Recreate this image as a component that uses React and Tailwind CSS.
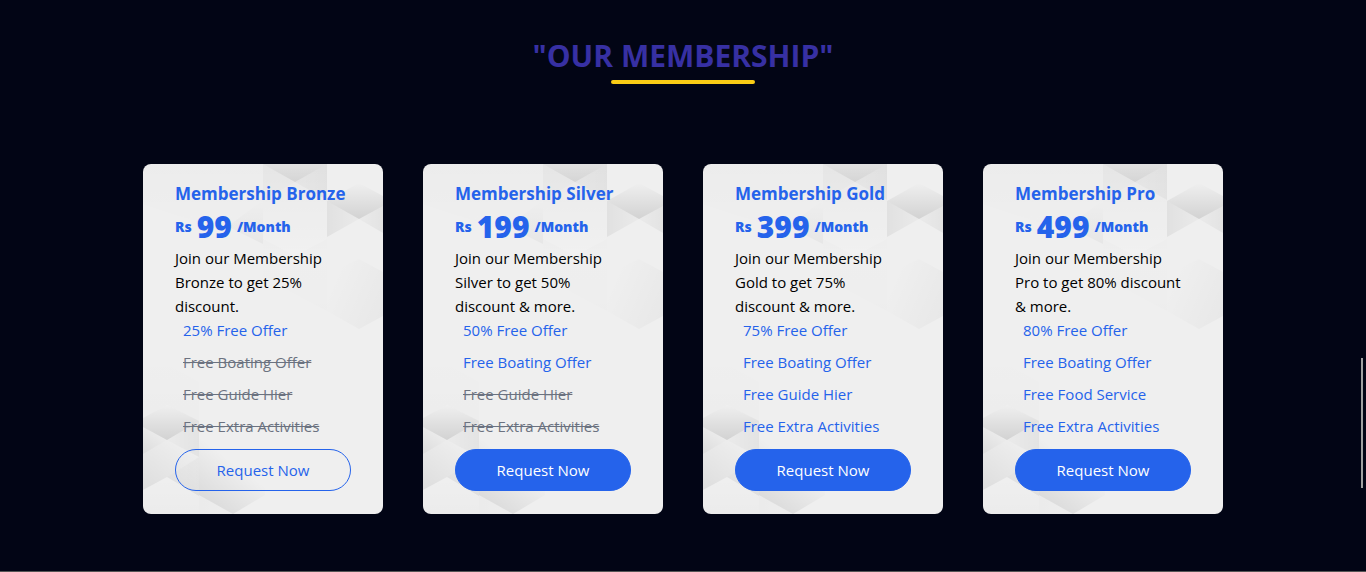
const plans = [
  { name: "Bronze", price: 99, text: "Join our Membership Bronze to get 25% discount.", offers: ["25% Free Offer", "Free Boating Offer", "Free Guide Hier", "Free Extra Activities"], included: 1, outline: true },
  { name: "Silver", price: 199, text: "Join our Membership Silver to get 50% discount & more.", offers: ["50% Free Offer", "Free Boating Offer", "Free Guide Hier", "Free Extra Activities"], included: 2 },
  { name: "Gold", price: 399, text: "Join our Membership Gold to get 75% discount & more.", offers: ["75% Free Offer", "Free Boating Offer", "Free Guide Hier", "Free Extra Activities"], included: 4 },
  { name: "Pro", price: 499, text: "Join our Membership Pro to get 80% discount & more.", offers: ["80% Free Offer", "Free Boating Offer", "Free Food Service", "Free Extra Activities"], included: 4 },
];

function Fade({ id, x1 = 0, y1 = 0, x2 = 0, y2 = 1, from, to }) {
  return (
    <linearGradient id={id} x1={x1} y1={y1} x2={x2} y2={y2}>
      <stop offset="0" stopColor="#000" stopOpacity={from} />
      <stop offset="1" stopColor="#000" stopOpacity={to} />
    </linearGradient>
  );
}

function CardPattern({ id }) {
  const fill = (name) => `url(#${id}-${name})`;
  return (
    <svg aria-hidden="true" className="absolute inset-0 h-full w-full" viewBox="0 0 240 350" preserveAspectRatio="none">
      <defs>
        <Fade id={`${id}-deep`} from={0} to={0.12} />
        <Fade id={`${id}-top`} from={0.02} to={0.08} />
        <Fade id={`${id}-down`} from={0.04} to={0} />
        <Fade id={`${id}-soft`} from={0} to={0.035} />
        <Fade id={`${id}-left`} x1={0} x2={1} y2={0} from={0.06} to={0.02} />
        <Fade id={`${id}-right`} x1={1} x2={0} y2={0} from={0.05} to={0.02} />
        <Fade id={`${id}-corner`} y1={1} x2={0.7} y2={0} from={0.08} to={0} />
        <Fade id={`${id}-wing`} x1={0.25} y1={1} x2={0.65} y2={0.4} from={0.09} to={0} />
        <Fade id={`${id}-fade`} x1={1} y1={0.8} x2={0.1} y2={0.3} from={0.03} to={0} />
      </defs>
      <path fill={fill("down")} d="M0 0H120V80L60 60L0 40Z" opacity=".3" />
      <path fill={fill("down")} d="M120 0H184V90H120Z" />
      <path fill={fill("top")} d="M120 0H184L152 18Z" />
      <path fill={fill("right")} d="M152 18L184 0V36Z" opacity=".5" />
      <path fill="#fff" opacity=".15" d="M120 36L152 18L184 36V75L152 92L120 75Z" />
      <path fill={fill("soft")} d="M88 60L120 36V80L88 64Z" />
      <path fill={fill("deep")} d="M184 37L216 19L240 32V42L216 55Z" />
      <path fill={fill("left")} d="M184 37L216 55L184 73Z" />
      <path fill={fill("right")} d="M216 55L240 42V69Z" />
      <path fill={fill("fade")} d="M184 110L216 95L240 108V152L216 165L184 147Z" />
      <path fill={fill("soft")} d="M120 75L152 92L184 75V147L152 130L120 112Z" opacity=".2" />
      <path fill={fill("soft")} d="M0 190L24 200L56 218V257L24 241L0 254Z" opacity=".3" />
      <path fill={fill("deep")} d="M0 254L24 241L56 257L24 276L0 263Z" />
      <path fill={fill("corner")} d="M0 263L24 276L0 290Z" />
      <path fill={fill("right")} d="M24 276L56 257V293Z" />
      <path fill={fill("corner")} d="M0 290L24 276L56 293V332L24 313L0 326Z" />
      <path fill={fill("right")} d="M24 313L56 293V332Z" opacity=".5" />
      <path fill={fill("wing")} d="M56 331V275H122V331L90 350Z" />
      <path fill={fill("left")} d="M56 331L90 350H56Z" opacity=".3" />
      <path fill={fill("soft")} d="M0 326L24 313L56 331V350H0Z" opacity=".4" />
    </svg>
  );
}

function PlanCard({ plan }) {
  return (
    <article className="relative w-60 overflow-hidden rounded-lg bg-[#efefef] px-8 pt-4 pb-[23px]">
      <CardPattern id={plan.name} />
      <div className="relative">
        <h3 className="text-[17px] leading-7 font-bold text-[#2563eb]">Membership {plan.name}</h3>
        <p className="flex h-[38px] items-center gap-[5px] font-['Noto_Sans','Open_Sans',sans-serif] font-black text-[#2563eb]">
          <span className="text-sm">Rs</span>
          <span className="text-3xl">{plan.price}</span>
          <span className="text-sm">/Month</span>
        </p>
        <p className="pr-1 text-[15px] leading-6 text-black">{plan.text}</p>
        <ul className="flex flex-col gap-2 pl-2 text-[15px] leading-6 text-[#2563eb]">
          {plan.offers.map((offer, i) => (
            <li key={offer} className={i < plan.included ? "" : "text-[#6b7280] line-through"}>{offer}</li>
          ))}
        </ul>
        <button
          type="button"
          className={
            plan.outline
              ? "mt-[11px] w-full rounded-full border border-[#2563eb] py-2 text-[15px] leading-6 text-[#2563eb]"
              : "mt-[11px] w-full rounded-full border border-[#2563eb] bg-[#2563eb] py-2 text-[15px] leading-6 text-white"
          }
        >
          Request Now
        </button>
      </div>
    </article>
  );
}

export default function App() {
  return (
    <main className="relative min-h-screen border-b border-[#555] bg-[#020515] px-8 pt-[38px] pb-14 font-['Open_Sans','Noto_Sans',sans-serif]">
      <header className="flex flex-col items-center">
        <h2 className="text-3xl leading-9 font-bold text-[#3730a3]">"OUR MEMBERSHIP"</h2>
        <div className="mt-1.5 h-1 w-36 rounded-full bg-[#facc15]" />
      </header>
      <section className="mt-20 flex flex-wrap justify-center gap-10">
        {plans.map((plan) => (
          <PlanCard key={plan.name} plan={plan} />
        ))}
      </section>
      <div className="absolute top-[358px] right-[3px] h-[130px] w-0.5 bg-[#a0a0a0]" />
    </main>
  );
}
